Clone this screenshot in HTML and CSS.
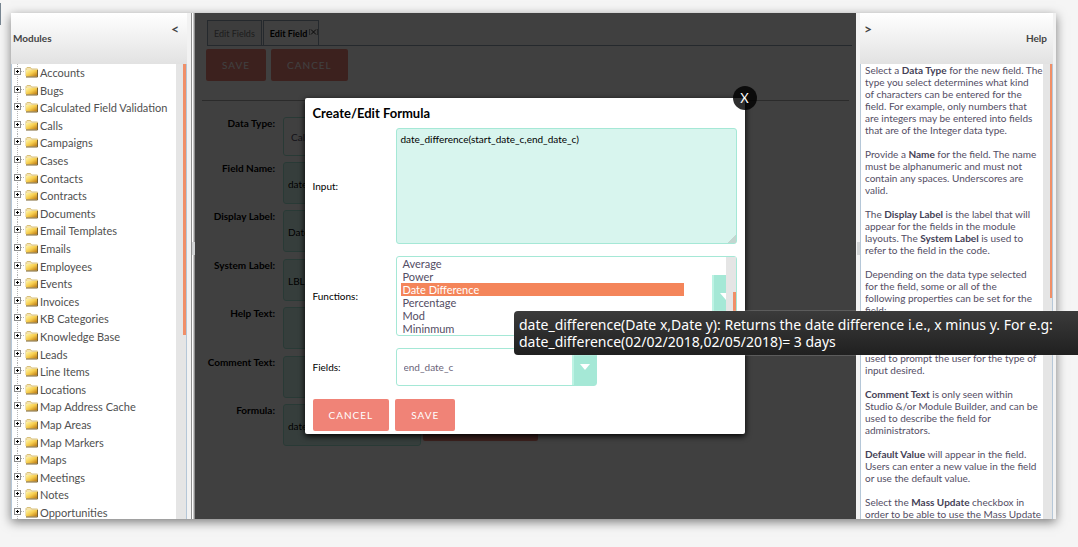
FILE: index.html
```html
<!DOCTYPE html>
<html lang="en">
<head>
<meta charset="utf-8">
<title>Studio - Create/Edit Formula</title>
<link rel="stylesheet" href="styles.css">
</head>
<body>
<svg class="defs" width="0" height="0" aria-hidden="true">
  <defs>
    <linearGradient id="gold" x1="0" y1="0" x2="1" y2="1">
      <stop offset="0" stop-color="#fff6a8"/>
      <stop offset=".5" stop-color="#f6cc4c"/>
      <stop offset="1" stop-color="#b87410"/>
    </linearGradient>
    <symbol id="node" viewBox="0 0 26 18">
      <path d="M4.500 0V18" stroke="#b4b4b4" stroke-dasharray="1 1"/>
      <path d="M8 7.500H12" stroke="#b4b4b4" stroke-dasharray="1 1"/>
      <rect x="1.500" y="4.500" width="6" height="6" fill="#fff" stroke="#8c8c8c"/>
      <path d="M3 7.500H6M4.500 6V9" stroke="#000"/>
      <path d="M13 4.500L14 3.500H17.500L18.500 5H24.500V12H13Z" fill="#f5e3ac" stroke="#d8c07c"/>
      <path d="M13 6H24V12.500H13Z" fill="url(#gold)"/>
      <path d="M13 13H24.500V6" fill="none" stroke="#7c6430"/>
    </symbol>
  </defs>
</svg>
<div class="side-tab"></div>
<div class="studio">
  <aside class="panel modules">
    <header class="panel-head">
      <h2>Modules</h2>
      <button class="collapse" type="button" aria-label="Collapse modules">&lt;</button>
    </header>
    <div class="panel-body">
      <ul class="tree">
        <li><svg><use href="#node"/></svg><a href="#">Accounts</a></li>
        <li><svg><use href="#node"/></svg><a href="#">Bugs</a></li>
        <li><svg><use href="#node"/></svg><a href="#">Calculated Field Validation</a></li>
        <li><svg><use href="#node"/></svg><a href="#">Calls</a></li>
        <li><svg><use href="#node"/></svg><a href="#">Campaigns</a></li>
        <li><svg><use href="#node"/></svg><a href="#">Cases</a></li>
        <li><svg><use href="#node"/></svg><a href="#">Contacts</a></li>
        <li><svg><use href="#node"/></svg><a href="#">Contracts</a></li>
        <li><svg><use href="#node"/></svg><a href="#">Documents</a></li>
        <li><svg><use href="#node"/></svg><a href="#">Email Templates</a></li>
        <li><svg><use href="#node"/></svg><a href="#">Emails</a></li>
        <li><svg><use href="#node"/></svg><a href="#">Employees</a></li>
        <li><svg><use href="#node"/></svg><a href="#">Events</a></li>
        <li><svg><use href="#node"/></svg><a href="#">Invoices</a></li>
        <li><svg><use href="#node"/></svg><a href="#">KB Categories</a></li>
        <li><svg><use href="#node"/></svg><a href="#">Knowledge Base</a></li>
        <li><svg><use href="#node"/></svg><a href="#">Leads</a></li>
        <li><svg><use href="#node"/></svg><a href="#">Line Items</a></li>
        <li><svg><use href="#node"/></svg><a href="#">Locations</a></li>
        <li><svg><use href="#node"/></svg><a href="#">Map Address Cache</a></li>
        <li><svg><use href="#node"/></svg><a href="#">Map Areas</a></li>
        <li><svg><use href="#node"/></svg><a href="#">Map Markers</a></li>
        <li><svg><use href="#node"/></svg><a href="#">Maps</a></li>
        <li><svg><use href="#node"/></svg><a href="#">Meetings</a></li>
        <li><svg><use href="#node"/></svg><a href="#">Notes</a></li>
        <li><svg><use href="#node"/></svg><a href="#">Opportunities</a></li>
      </ul>
      <div class="track"><div class="thumb thumb-modules"></div></div>
    </div>
  </aside>
  <div class="splitter splitter-left"><span class="grip"></span></div>

  <main class="editor">
    <nav class="tabs">
      <a class="tab" href="#">Edit Fields</a>
      <a class="tab active" href="#">Edit Field
        <svg class="tab-close" viewBox="0 0 9 8"><path d="M.5 1V7M8.500 1V7" stroke="#999"/><path d="M2 1.500L7 6.500M7 1.500L2 6.500" fill="none" stroke="#222"/></svg>
      </a>
    </nav>
    <div class="actions">
      <button class="btn" type="button">SAVE</button>
      <button class="btn" type="button">CANCEL</button>
    </div>
    <form class="fields">
      <div class="row"><label for="f-type">Data Type:</label><select id="f-type" class="box type"><option>Calculated Field</option></select></div>
      <div class="row"><label for="f-name">Field Name:</label><input id="f-name" class="box" value="date_difference_c"></div>
      <div class="row"><label for="f-disp">Display Label:</label><input id="f-disp" class="box" value="Date Difference"></div>
      <div class="row"><label for="f-sys">System Label:</label><input id="f-sys" class="box" value="LBL_DATE_DIFFERENCE"></div>
      <div class="row"><label for="f-help">Help Text:</label><input id="f-help" class="box"></div>
      <div class="row"><label for="f-com">Comment Text:</label><input id="f-com" class="box"></div>
      <div class="row"><label for="f-form">Formula:</label><input id="f-form" class="box" value="date_difference(start_date_c,end_date_c)"><button class="btn edit" type="button" aria-label="Edit formula"></button></div>
    </form>

    <div class="overlay">
      <section class="dialog" role="dialog" aria-labelledby="dlg-title">
        <button class="close" type="button" aria-label="Close">X</button>
        <h1 id="dlg-title">Create/Edit Formula</h1>
        <div class="dialog-grid">
          <label for="d-input">Input:</label>
          <div class="holder">
            <textarea id="d-input">date_difference(start_date_c,end_date_c)</textarea>
            <svg class="resizer" viewBox="0 0 8 8"><path d="M7 .5H8M6 1.500H8M5 2.500H8M4 3.500H8M3 4.500H8M2 5.500H8M1 6.500H8M0 7.500H8" stroke="#c3d6d0" fill="none"/></svg>
          </div>
          <label for="d-func">Functions:</label>
          <div class="holder">
            <select id="d-func" size="6">
              <option>Average</option>
              <option>Power</option>
              <option selected>Date Difference</option>
              <option>Percentage</option>
              <option>Mod</option>
              <option>Mininmum</option>
            </select>
            <div class="list-track"><div class="list-thumb"></div></div>
          </div>
          <label for="d-field">Fields:</label>
          <select id="d-field"><option>end_date_c</option></select>
        </div>
        <div class="dialog-actions">
          <button class="btn" type="button">CANCEL</button>
          <button class="btn" type="button">SAVE</button>
        </div>
      </section>
    </div>
  </main>

  <div class="splitter splitter-right"><span class="grip"></span></div>
  <aside class="panel help">
    <header class="panel-head">
      <button class="collapse" type="button" aria-label="Collapse help">&gt;</button>
      <h2>Help</h2>
    </header>
    <div class="panel-body">
      <div class="help-text">
        <p>Select a <b>Data Type</b> for the new field. The<br>type you select determines what kind<br>of characters can be entered for the<br>field. For example, only numbers that<br>are integers may be entered into fields<br>that are of the Integer data type.</p>
        <p>Provide a <b>Name</b> for the field. The name<br>must be alphanumeric and must not<br>contain any spaces. Underscores are<br>valid.</p>
        <p>The <b>Display Label</b> is the label that will<br>appear for the fields in the module<br>layouts. The <b>System Label</b> is used to<br>refer to the field in the code.</p>
        <p>Depending on the data type selected<br>for the field, some or all of the<br>following properties can be set for the<br>field:</p>
        <p class="prompt">used to prompt the user for the type of<br>input desired.</p>
        <p><b>Comment Text</b> is only seen within<br>Studio &amp;/or Module Builder, and can be<br>used to describe the field for<br>administrators.</p>
        <p><b>Default Value</b> will appear in the field.<br>Users can enter a new value in the field<br>or use the default value.</p>
        <p>Select the <b>Mass Update</b> checkbox in<br>order to be able to use the Mass Update</p>
      </div>
      <div class="track"><div class="thumb thumb-help"></div></div>
    </div>
  </aside>
</div>
<div class="tooltip" role="tooltip">date_difference(Date x,Date y): Returns the date difference i.e., x minus y. For e.g:<br>date_difference(02/02/2018,02/05/2018)= 3 days</div>
</body>
</html>
```
FILE: styles.css
```css
* { box-sizing: border-box; }
body {
  margin: 0;
  height: 100vh;
  padding: 13px 22px 28px 11px;
  background: #f5f5f5;
  font: 10px/12px Lato, sans-serif;
  color: #534d64;
  overflow: hidden;
}
button, input, select, textarea { font: inherit; margin: 0; }
a { color: inherit; text-decoration: none; }
.defs { position: absolute; }
.side-tab {
  position: absolute;
  left: 0;
  top: 3px;
  width: 1px;
  height: 22px;
  background: #778591;
}

.studio {
  display: grid;
  grid-template-columns: 176px 8px 1fr 4px 196px;
  height: 100%;
  background: #f2f2f2;
  box-shadow: 0 3px 10px rgba(0, 0, 0, .5);
}
.panel {
  display: flex;
  flex-direction: column;
  min-height: 0;
  overflow: hidden;
}
.panel-head {
  display: flex;
  justify-content: space-between;
  height: 51px;
  flex: none;
  background: linear-gradient(#fff, #e2e2e2);
}
.panel-head h2 {
  margin: 0;
  padding-top: 18px;
  font-size: 10px;
  line-height: 14px;
  color: #444;
}
.collapse {
  align-self: flex-start;
  border: 0;
  background: none;
  padding: 9px 8px 0;
  font-size: 14px;
  line-height: 14px;
  font-weight: 700;
  color: #444;
}
.modules h2 { padding-left: 2px; }
.help { padding-right: 3px; }
.help .collapse { padding-left: 4px; }
.help h2 { padding-right: 6px; }
.panel-body {
  display: flex;
  flex: 1;
  min-height: 0;
  overflow: hidden;
  background: #fff;
  border: solid #b5c7d8;
  border-width: 0 1px;
}
.track {
  flex: none;
  width: 10px;
  padding-left: 7px;
  background: #e5e5e5;
}
.thumb { width: 3px; background: #f08f68; }
.thumb-modules { height: 271px; }
.thumb-help { height: 234px; }

.tree {
  flex: 1;
  margin: 0;
  padding: 0 0 0 1px;
  list-style: none;
  font-size: 11px;
  color: #505050;
}
.tree li { display: flex; height: 18px; line-height: 18px; }
.tree li:nth-child(5n+2), .tree li:nth-child(5n+4) { height: 17px; }
.tree svg { width: 26px; height: 18px; flex: none; }
.tree a { padding-left: 1px; }

.help-text { flex: 1; padding-left: 4px; white-space: nowrap; }
.help-text p { margin: 0 0 12px; }
.help-text .prompt { padding-top: 24px; }
.help-text b { color: #453f57; }

.splitter { display: flex; align-items: center; justify-content: flex-end; }
.splitter-left {
  background: linear-gradient(90deg, #f2f2f2 4px, #8e8e8e 4px 5px, #fff 5px 6px, #8e8e8e 7px);
}
.grip {
  width: 3px;
  height: 13px;
  margin-bottom: 36px;
  background: #d2d4d5;
  position: relative;
  z-index: 2;
}

.editor {
  position: relative;
  min-width: 0;
  background: #fff;
  color: #000;
}
.tabs {
  display: flex;
  gap: 1px;
  margin: 7px 4px 0 12px;
  border-bottom: 1px solid #94a2b5;
}
.tab {
  padding: 6px 6px 4px;
  font-size: 9px;
  line-height: 14px;
  border: 1px solid #94a2b5;
  border-bottom: 0;
  background: #f2f2f2;
  color: #777;
}
.tab.active { display: flex; padding: 6px 0 4px 6px; gap: 2px; background: #fff; color: #000; font-weight: 700; }
.tab-close { width: 9px; height: 8px; margin-top: 1px; }
.actions {
  display: flex;
  gap: 5px;
  margin: 3px 7px 0;
  padding: 0 0 19px 4px;
  border-bottom: 1px solid #aaa;
}
.btn {
  height: 32px;
  padding: 0 16px;
  border: 0;
  border-radius: 2px;
  background: #f08377;
  color: #fff;
  font-size: 10px;
  letter-spacing: 1px;
}
.fields { padding-top: 16px; }
.row {
  display: grid;
  grid-template-columns: 80px 138px auto;
  justify-content: start;
  column-gap: 8px;
  height: 45px;
}
.row:nth-child(n+2) { height: 48px; }
.row:nth-child(odd):not(:first-child) { height: 49px; }
.row label { text-align: right; font-weight: 700; line-height: 13px; }
.box {
  width: 138px;
  height: 42px;
  padding: 2px 4px 0;
  border: 1px solid #a5e8d6;
  border-radius: 3px;
  background: #d8f5ee;
  color: #000;
}
.box.type { height: 39px; padding: 0 7px; background: #fff; color: #534d64; appearance: none; }
.row .edit { align-self: start; margin-left: -6px; margin-top: 5px; width: 115px; padding: 0; }

.overlay {
  position: absolute;
  inset: 0;
  display: grid;
  place-items: center;
  padding-right: 2px;
  background: rgba(0, 0, 0, .75);
}
.dialog {
  position: relative;
  width: 440px;
  padding: 8px 8px 3px;
  border-radius: 2px;
  background: #fff;
  color: #000;
  box-shadow: 0 2px 6px #000;
}
.close {
  position: absolute;
  top: -12px;
  right: -12px;
  width: 24px;
  height: 24px;
  padding: 0;
  border: 0;
  border-radius: 50%;
  background: rgba(0, 0, 0, .82);
  color: #fff;
  font-size: 13px;
}
.dialog h1 { margin: 0 0 7px; font-size: 13px; line-height: 15px; }
.dialog-grid {
  display: grid;
  grid-template-columns: 71px 1fr;
  align-items: center;
  gap: 12px;
}
.holder { position: relative; display: flex; }
.holder textarea, .holder select, #d-field {
  width: 100%;
  border: 1px solid #a5e8d6;
  border-radius: 3px;
  outline: 0;
}
.holder textarea {
  height: 116px;
  padding: 4px;
  background: #d8f5ee;
  color: #000;
  resize: none;
}
.resizer { position: absolute; right: 1px; bottom: 1px; width: 8px; height: 8px; }
#d-func {
  height: 80px;
  padding: 0 52px 0 4px;
  overflow: hidden;
  font-size: 11px;
  color: #534d64;
  background:
    linear-gradient(90deg, #bdf3e4 2px, #a5e8d6 2px) right 0 top 18px / 24px 40px no-repeat,
    #fff;
}
#d-func option { height: 13px; min-height: 13px; padding: 0 2px; line-height: 13px; }
#d-func option:checked { background: #f4855a linear-gradient(#f4855a, #f4855a); color: #fff; -webkit-text-fill-color: #fff; }
.list-track {
  position: absolute;
  top: 1px;
  right: 1px;
  bottom: 1px;
  width: 10px;
  padding: 35px 0 0 7px;
  background: #e5e5e5;
}
.list-track::before {
  content: "";
  position: absolute;
  right: 10px;
  top: 36px;
  border: solid transparent;
  border-width: 7px 0 0 6px;
  border-top-color: #fff;
}
.list-thumb { width: 3px; height: 30px; background: #f08f68; }
#d-field {
  width: 201px;
  height: 38px;
  padding: 0 7px;
  appearance: none;
  color: #6b6579;
  background:
    url("data:image/svg+xml,%3Csvg xmlns='http://www.w3.org/2000/svg' width='10' height='6'%3E%3Cpath d='M0 0H10L5 6Z' fill='white'/%3E%3C/svg%3E") right 6px top 15px no-repeat,
    linear-gradient(90deg, #bdf3e4 2px, #a5e8d6 2px) right / 24px 100% no-repeat,
    #fff;
}
.dialog-actions { display: flex; gap: 6px; margin-top: 13px; }

.tooltip {
  position: absolute;
  left: 514px;
  right: 0;
  top: 311px;
  z-index: 3;
  padding: 5px;
  border-radius: 4px 0 0 4px;
  background: linear-gradient(#3b3b3b, #202020);
  box-shadow: 0 0 0 1px rgba(255, 255, 255, .15);
  color: #fff;
  font: 14px/17px "Noto Sans", sans-serif;
  white-space: nowrap;
}
```
